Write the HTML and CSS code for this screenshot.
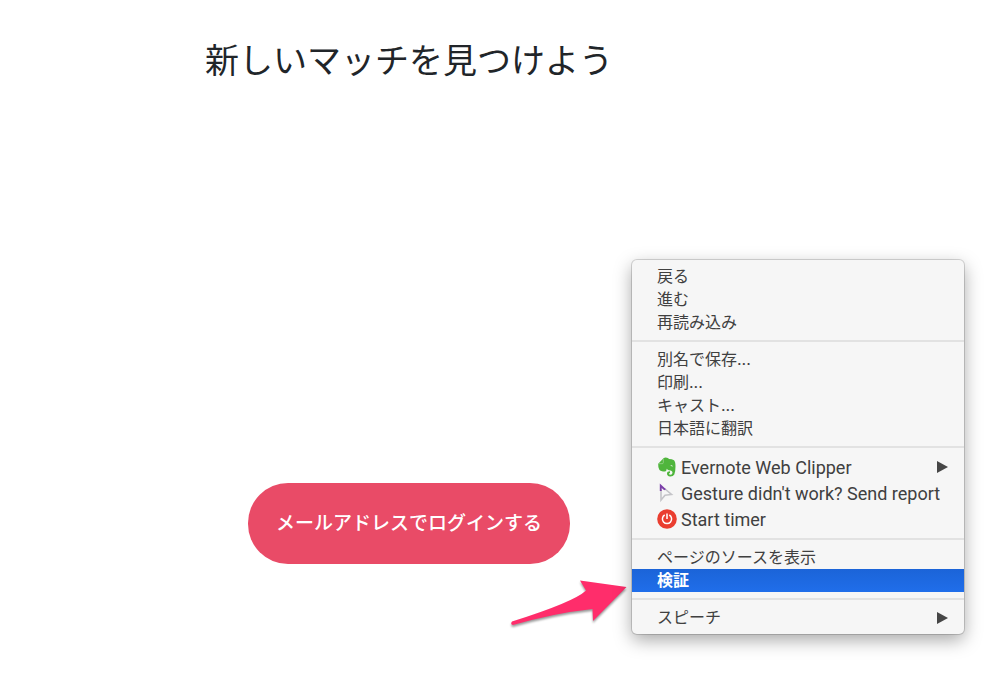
FILE: index.html
```html
<!DOCTYPE html>
<html lang="ja">
<head>
<meta charset="utf-8">
<meta name="viewport" content="width=device-width, initial-scale=1">
<title>新しいマッチを見つけよう</title>
<link rel="stylesheet" href="styles.css">
</head>
<body>
<main class="page">
  <h1 class="title">新しいマッチを見つけよう</h1>
  <button class="login" type="button">メールアドレスでログインする</button>
</main>

<svg class="arrow" width="124" height="56" viewBox="0 0 124 56" aria-hidden="true">
  <path d="M5 49.500Q3 52.500 6 53Q48 41 85.500 37L86 49L119.500 15L73 8.500L79 18.500Q67 30 5 49.500Z" fill="#ff2d6b"/>
</svg>

<div class="menu" role="menu">
  <div class="group">
    <button class="item" role="menuitem">戻る</button>
    <button class="item" role="menuitem">進む</button>
    <button class="item" role="menuitem">再読み込み</button>
  </div>
  <div class="group">
    <button class="item" role="menuitem">別名で保存...</button>
    <button class="item" role="menuitem">印刷...</button>
    <button class="item" role="menuitem">キャスト...</button>
    <button class="item" role="menuitem">日本語に翻訳</button>
  </div>
  <div class="group">
    <button class="item item-ext" role="menuitem">
      <svg class="icon" width="20" height="20" viewBox="0 0 20 20" aria-hidden="true">
        <path d="M1.200 6.800L6.500 1.200Q8 .3 10 .8Q11.500 1 12 2Q15 2 17 3.200Q18.500 4.500 18.500 9.500Q18.500 15 17.300 17.500Q16 19.700 13 19.500Q10 19.200 10 16.500Q10 14.200 13 14.200V16Q12 16 12 16.800Q12 17.700 13.500 17.700Q15.500 17.700 15.500 15.500Q15.500 13.500 12 13.200Q10.500 13 9.800 11.800Q9.500 14.500 8 14.500Q3.500 14.500 2.200 12.500Q1 10 1.200 6.800Z" fill="#4fb53c"/>
        <path d="M2 6.700H5.200Q6.300 6.700 6.300 5.600V2" fill="none" stroke="#a5d99b" stroke-width=".7"/>
        <path d="M13.300 9Q14.500 7.200 16 9.400Q14.600 8.800 13.300 9Z" fill="#f6f6f6"/>
      </svg>
      <span class="label">Evernote Web Clipper</span>
      <svg class="more" width="11" height="12" viewBox="0 0 11 12" aria-hidden="true"><path d="M0 0L11 6L0 12Z" fill="#464646"/></svg>
    </button>
    <button class="item item-ext" role="menuitem">
      <svg class="icon" width="20" height="20" viewBox="0 0 20 20" aria-hidden="true">
        <path d="M4 7V17L8 12.200L14.500 11.500L7.500 5.500" fill="#f6f6f6" stroke="#c4c4c8" stroke-width="1.600"/>
        <path d="M2.800 .5L9 6.200L7.200 7.200L4.700 5V8H2.800Z" fill="#7b3fa8"/>
      </svg>
      <span class="label">Gesture didn't work? Send report</span>
    </button>
    <button class="item item-ext" role="menuitem">
      <svg class="icon" width="20" height="20" viewBox="0 0 20 20" aria-hidden="true">
        <circle cx="10" cy="10" r="9.800" fill="#ea3e30"/>
        <path d="M7.700 6A4.600 4.600 0 1 0 12.300 6M10 4.500V10" fill="none" stroke="#fff" stroke-width="1.500"/>
      </svg>
      <span class="label">Start timer</span>
    </button>
  </div>
  <div class="group">
    <button class="item" role="menuitem">ページのソースを表示</button>
    <button class="item item-active" role="menuitem">検証</button>
  </div>
  <div class="group">
    <button class="item" role="menuitem">
      <span class="label">スピーチ</span>
      <svg class="more" width="11" height="12" viewBox="0 0 11 12" aria-hidden="true"><path d="M0 0L11 6L0 12Z" fill="#464646"/></svg>
    </button>
  </div>
</div>
</body>
</html>
```
FILE: styles.css
```css
* {
  box-sizing: border-box;
}

body {
  margin: 0;
  background: #fff;
  color: #212529;
  font-family: "Noto Sans CJK JP", sans-serif;
}

button {
  border: 0;
  font-family: inherit;
  cursor: pointer;
}

.page {
  display: flex;
  flex-direction: column;
  align-items: center;
  gap: 399px;
  padding: 34px 182px 40px 0;
}

.title {
  margin: 0;
  font-size: 34px;
  line-height: 50px;
  font-weight: 400;
}

.login {
  padding: 25px 28px 28px;
  border-radius: 40px;
  background: #e94b67;
  color: #fff;
  font-size: 19px;
  line-height: 28px;
  font-weight: 500;
}

.arrow {
  position: absolute;
  left: 507px;
  top: 572px;
  filter: drop-shadow(0 2px 1px rgba(0, 0, 0, 0.4));
}

.menu {
  position: absolute;
  left: 632px;
  top: 260px;
  width: 332px;
  padding: 5px 0;
  border-radius: 5px;
  background: #f6f6f6;
  box-shadow: 0 0 0 1px rgba(0, 0, 0, 0.15), 0 6px 18px rgba(0, 0, 0, 0.35);
}

.group + .group {
  margin-top: 6px;
  padding-top: 6px;
  border-top: 2px solid #e2e2e2;
}

.item {
  display: flex;
  align-items: center;
  width: 100%;
  height: 23px;
  padding: 0 16px 0 25px;
  background: transparent;
  color: #404040;
  font-family: Inter, "Noto Sans CJK JP", sans-serif;
  font-size: 16px;
  line-height: 23px;
  text-align: left;
  white-space: nowrap;
}

.item-ext {
  gap: 4px;
  height: 26px;
  font-family: Roboto, sans-serif;
  font-size: 18px;
}

.item-active {
  background: linear-gradient(#1b64d8, #206eea);
  color: #fff;
  font-weight: 700;
}

.icon {
  flex: none;
}

.more {
  flex: none;
  margin-left: auto;
}
```
